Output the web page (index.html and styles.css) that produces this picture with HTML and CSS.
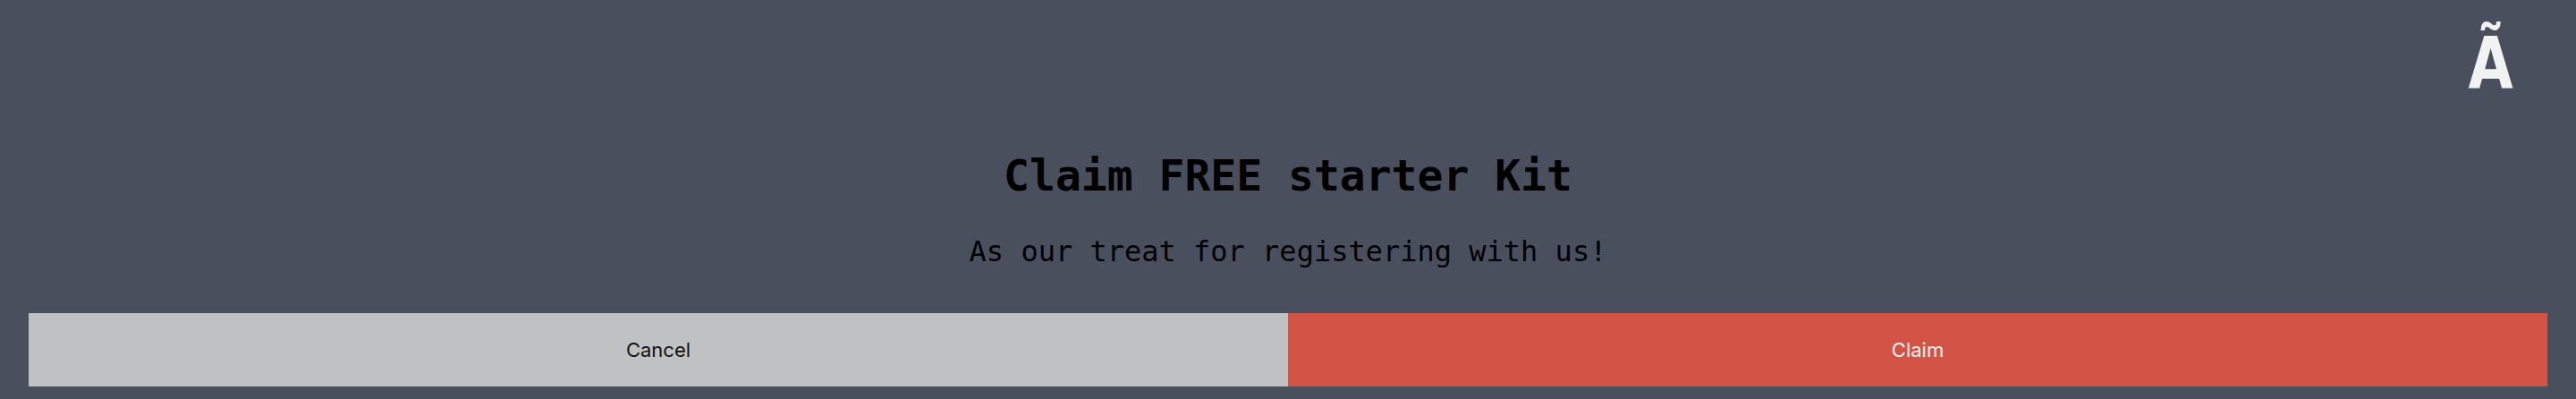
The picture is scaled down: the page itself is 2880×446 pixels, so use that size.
FILE: index.html
```html
<!DOCTYPE html>
<html lang="en">
<head>
<meta charset="utf-8">
<title>Claim FREE starter Kit</title>
<link rel="stylesheet" href="styles.css">
</head>
<body>
<div class="page">
  <span class="corner-glyph">Ã</span>
  <h1 class="title">Claim FREE starter Kit</h1>
  <p class="subtitle">As our treat for registering with us!</p>
  <div class="actions">
    <button class="btn btn-cancel">Cancel</button>
    <button class="btn btn-claim">Claim</button>
  </div>
</div>
</body>
</html>
```

FILE: styles.css
```css
html, body {
  margin: 0;
  padding: 0;
  background: #4a4f5e;
}
.page {
  position: relative;
  width: 2880px;
  height: 446px;
  box-sizing: border-box;
  padding: 168px 32px 0;
  display: flex;
  flex-direction: column;
  align-items: stretch;
}
.corner-glyph {
  position: absolute;
  top: 32px;
  right: 70px;
  font-family: "Liberation Sans Narrow", "DejaVu Sans Condensed", "Liberation Sans", sans-serif;
  font-stretch: condensed;
  font-weight: bold;
  font-size: 80px;
  line-height: 80px;
  color: #f2f2f2;
  transform: scaleX(0.9);
  transform-origin: right center;
}
.title {
  margin: 0;
  text-align: center;
  font-family: "DejaVu Sans Mono", monospace;
  font-weight: bold;
  font-size: 48px;
  line-height: 56px;
  color: #000;
}
.subtitle {
  margin: 38px 0 0;
  text-align: center;
  font-family: "DejaVu Sans Mono", monospace;
  font-weight: normal;
  font-size: 32px;
  line-height: 38px;
  color: #000;
}
.actions {
  display: flex;
  margin-top: 50px;
}
.btn {
  flex: 1 1 0;
  height: 82px;
  border: 0;
  margin: 0;
  padding: 0;
  font-family: Inter, "Liberation Sans", sans-serif;
  font-size: 22px;
  cursor: pointer;
}
.btn-cancel {
  background: #c0c1c3;
  color: #111;
}
.btn-claim {
  background: #d35446;
  color: #f3f3f3;
}
```
